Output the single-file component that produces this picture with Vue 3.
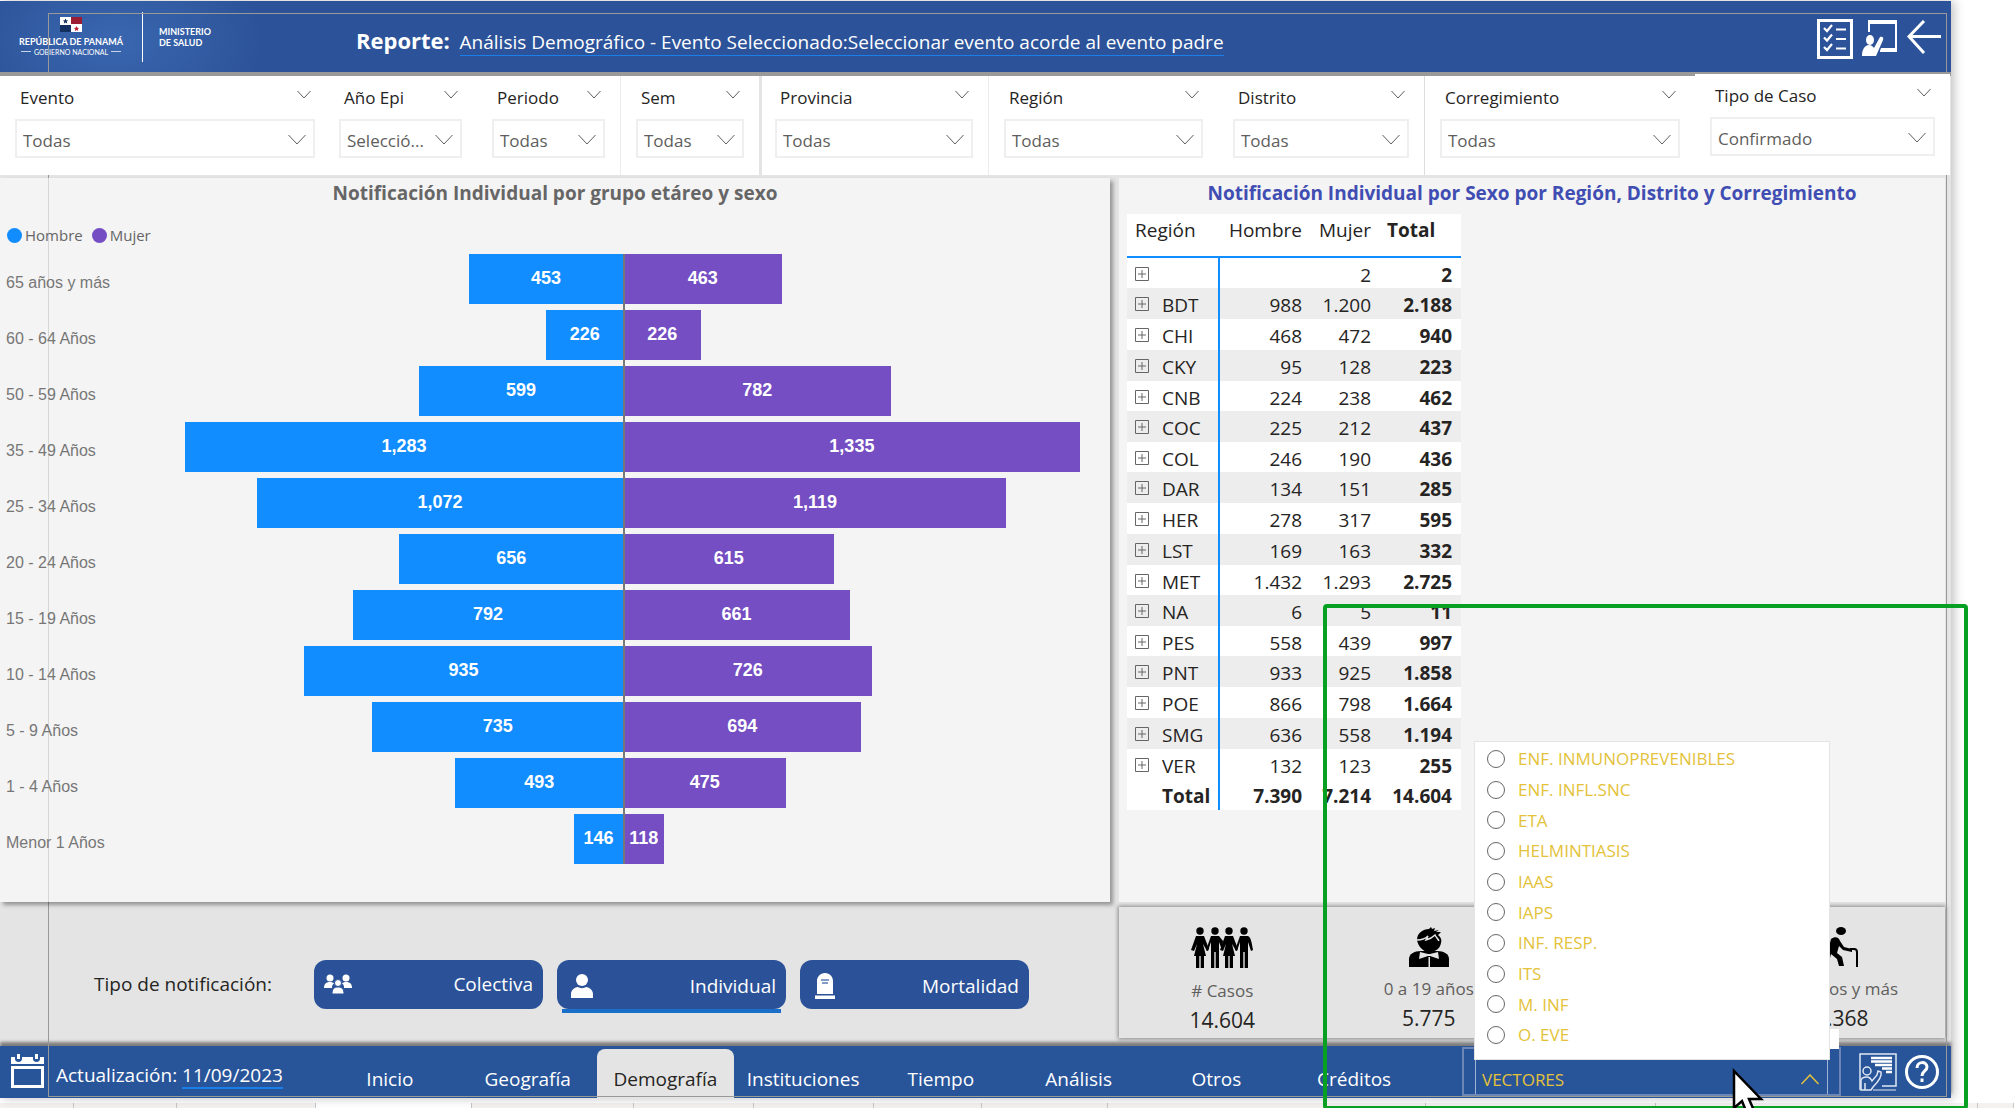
<script setup>
import { ref } from 'vue'

const filters = [
  { id: 'evento', label: 'Evento', value: 'Todas' },
  { id: 'anio', label: 'Año Epi', value: 'Selecció...' },
  { id: 'periodo', label: 'Periodo', value: 'Todas' },
  { id: 'sem', label: 'Sem', value: 'Todas' },
  { id: 'provincia', label: 'Provincia', value: 'Todas' },
  { id: 'region', label: 'Región', value: 'Todas' },
  { id: 'distrito', label: 'Distrito', value: 'Todas' },
  { id: 'corregimiento', label: 'Corregimiento', value: 'Todas' },
  { id: 'tipo', label: 'Tipo de Caso', value: 'Confirmado' },
]

const groups = [
  ['65 años y más', 453, 463],
  ['60 - 64 Años', 226, 226],
  ['50 - 59 Años', 599, 782],
  ['35 - 49 Años', 1283, 1335],
  ['25 - 34 Años', 1072, 1119],
  ['20 - 24 Años', 656, 615],
  ['15 - 19 Años', 792, 661],
  ['10 - 14 Años', 935, 726],
  ['5 - 9 Años', 735, 694],
  ['1 - 4 Años', 493, 475],
  ['Menor 1 Años', 146, 118],
]
const scaleMax = 1340
const pct = (n) => (n / scaleMax) * 100 + '%'
const fmt = (n) => n.toLocaleString('en-US')

const regions = [
  ['', '', '2', '2'],
  ['BDT', '988', '1.200', '2.188'],
  ['CHI', '468', '472', '940'],
  ['CKY', '95', '128', '223'],
  ['CNB', '224', '238', '462'],
  ['COC', '225', '212', '437'],
  ['COL', '246', '190', '436'],
  ['DAR', '134', '151', '285'],
  ['HER', '278', '317', '595'],
  ['LST', '169', '163', '332'],
  ['MET', '1.432', '1.293', '2.725'],
  ['NA', '6', '5', '11'],
  ['PES', '558', '439', '997'],
  ['PNT', '933', '925', '1.858'],
  ['POE', '866', '798', '1.664'],
  ['SMG', '636', '558', '1.194'],
  ['VER', '132', '123', '255'],
]

const tabs = ['Inicio', 'Geografía', 'Demografía', 'Instituciones', 'Tiempo', 'Análisis', 'Otros', 'Créditos']
const activeTab = ref('Demografía')

const events = [
  'ENF. INMUNOPREVENIBLES',
  'ENF. INFL.SNC',
  'ETA',
  'HELMINTIASIS',
  'IAAS',
  'IAPS',
  'INF. RESP.',
  'ITS',
  'M. INF',
  'O. EVE',
]
const picked = ref('')

const sheets = [73, 103, 139, 156, 162, 120, 120, 107, 126, 319, 231, 323, 35]
</script>

<template>
  <div class="page">
    <div class="board">
      <header class="top">
        <div class="logo">
          <div class="republic">
            <svg width="22" height="15" viewBox="0 0 22 15" aria-hidden="true">
              <rect width="22" height="15" fill="#fff" />
              <rect x="11" width="11" height="7" fill="#9c1c34" />
              <rect y="8" width="11" height="7" fill="#14305e" />
              <path d="M5.500 1.500l.8 1.700 1.800.2-1.300 1.200.4 1.800-1.700-.9-1.600.9.300-1.800-1.300-1.200 1.800-.2z" fill="#14305e" />
              <path d="M16.500 9l.8 1.700 1.800.2-1.300 1.200.4 1.800-1.700-.9-1.600.9.300-1.800-1.300-1.200 1.800-.2z" fill="#c01c34" />
            </svg>
            <strong>REPÚBLICA DE PANAMÁ</strong>
            <small>GOBIERNO NACIONAL</small>
          </div>
          <div class="ministry">MINISTERIO<br />DE SALUD</div>
        </div>
        <h1>Reporte: <a href="#">Análisis Demográfico - Evento Seleccionado:Seleccionar evento acorde al evento padre</a></h1>
        <div class="tools">
          <button type="button" aria-label="Lista">
            <svg width="36" height="40" viewBox="0 0 36 40" fill="none" stroke="#fff">
              <rect x="1.500" y="1.500" width="33" height="37" stroke-width="3" />
              <path d="M7 9l3 3 5-6M7 18.500l3 3 5-6M7 28l3 3 5-6" stroke-width="2.200" />
              <path d="M19 10.500h10M19 20h10M19 29.500h10" stroke-width="2" />
            </svg>
          </button>
          <button type="button" aria-label="Presentación">
            <svg width="36" height="37" viewBox="0 0 36 37" fill="#fff">
              <path d="M7 12V1h27v30H18" fill="none" stroke="#fff" stroke-width="2" />
              <path d="M6 1h29v3H6zM19 28h16v3H18z" />
              <ellipse cx="8" cy="20" rx="4" ry="5" />
              <path d="M0 36c0-7 3-11 7-11 3 0 4 2 5 3l6-11c2-1 4 0 3 3l-7 16z" />
            </svg>
          </button>
          <button type="button" aria-label="Atrás" class="back">
            <svg width="34" height="34" viewBox="0 0 34 34" fill="none" stroke="#fff" stroke-width="3">
              <path d="M34 16.500H2M17 1L2 16.500 17 33" />
            </svg>
          </button>
        </div>
      </header>

      <section class="filters">
        <div v-for="f in filters" :key="f.id" class="filter" :class="f.id">
          <div class="filter-head">
            <label :for="f.id">{{ f.label }}</label>
            <svg width="14" height="9" viewBox="0 0 14 9" aria-hidden="true"><path d="M.5 1L7 8l6.500-7" /></svg>
          </div>
          <div class="box">
            <select :id="f.id"><option>{{ f.value }}</option></select>
            <svg width="18" height="11" viewBox="0 0 18 11" aria-hidden="true"><path d="M.5 1L9 10l8.500-9" /></svg>
          </div>
        </div>
      </section>

      <main>
        <section class="panel pyramid">
          <h2>Notificación Individual por grupo etáreo y sexo</h2>
          <ul class="legend">
            <li class="male">Hombre</li>
            <li class="female">Mujer</li>
          </ul>
          <div class="chart">
            <div v-for="g in groups" :key="g[0]" class="row">
              <span class="group">{{ g[0] }}</span>
              <div class="half left"><div class="bar m" :style="{ width: pct(g[1]) }">{{ fmt(g[1]) }}</div></div>
              <div class="half"><div class="bar f" :style="{ width: pct(g[2]) }">{{ fmt(g[2]) }}</div></div>
            </div>
          </div>
        </section>

        <section class="panel regions">
          <h2>Notificación Individual por Sexo por Región, Distrito y Corregimiento</h2>
          <table>
            <thead>
              <tr><th class="name">Región</th><th>Hombre</th><th>Mujer</th><th class="sum">Total</th></tr>
            </thead>
            <tbody>
              <tr v-for="r in regions" :key="r[0]">
                <td class="name">
                  <div>
                    <svg width="14" height="14" viewBox="0 0 14 14" aria-hidden="true">
                      <path d="M.5.5h13v13H.5zM3 7h8M7 3v8" fill="none" stroke="#666" />
                    </svg>
                    <span>{{ r[0] }}</span>
                  </div>
                </td>
                <td>{{ r[1] }}</td>
                <td>{{ r[2] }}</td>
                <td class="sum">{{ r[3] }}</td>
              </tr>
              <tr class="total"><td class="name">Total</td><td>7.390</td><td>7.214</td><td class="sum">14.604</td></tr>
            </tbody>
          </table>
        </section>

        <section class="kinds">
          <span>Tipo de notificación:</span>
          <button type="button">
            <svg width="28" height="20" viewBox="0 0 28 20" fill="#fff">
              <circle cx="6" cy="4" r="3.500" /><circle cx="22" cy="4" r="3.500" />
              <path d="M0 14c0-4 2-6 6-6 2 0 3 .5 4 1.500C8 11 8 12 8 14zM28 14c0-4-2-6-6-6-2 0-3 .5-4 1.500 2 1.500 2 2.500 2 4.500z" />
              <circle cx="14" cy="9" r="3.500" stroke="#2b5298" />
              <path d="M8 20c0-5 2-7 6-7s6 2 6 7z" stroke="#2b5298" />
            </svg>
            Colectiva
          </button>
          <button type="button" class="current">
            <svg width="28" height="24" viewBox="0 0 28 24" fill="#fff">
              <circle cx="15" cy="6" r="6" />
              <path d="M4 24v-4c0-4 4-7 7-7 2 1.500 6 1.500 8 0 3 0 7 3 7 7v4z" />
            </svg>
            Individual
          </button>
          <button type="button">
            <svg width="28" height="26" viewBox="0 0 28 26" fill="#fff">
              <path d="M7 21V8c0-4 3-8 8-8s8 4 8 8v13zM5 22.500h20V26H5z" />
              <path d="M11 7h8M12 10h6" stroke="#5c7db5" stroke-width="1.500" />
            </svg>
            Mortalidad
          </button>
        </section>

        <section class="cards">
          <div class="card">
            <svg width="62" height="42" viewBox="0 0 62 42">
              <circle cx="9" cy="4" r="3.700" /><circle cx="24" cy="4" r="3.700" /><circle cx="38" cy="4" r="3.700" /><circle cx="53" cy="4" r="3.700" />
              <path d="M5 9h8l5 13-2 2-4-7 3 12h-2v12H9.700V29H8.300v12H5V29H3l3-12-3 7-3-1z" />
              <path d="M34 9h8l5 13-2 2-4-7 3 12h-2v12h-3.300V29h-1.400v12H34V29h-2l3-12-3 7-3-1z" />
              <path d="M20 9h8l4 5-1 9-3-8v26h-3.300V25h-1.400v16H20V15l-3 9-2-1z" />
              <path d="M49 9h8c3 1 4 8 5 14l-2 1-3-9v26h-3.300V25h-1.400v16H49V15l-3 9-2-1z" />
            </svg>
            <span>#&nbsp;Casos</span><b>14.604</b>
          </div>
          <div class="card">
            <svg width="40" height="40" viewBox="0 0 40 40">
              <path d="M8 13c0-7 6-11 12-11l2-2 1 2 3-1-1 3 5-1-3 2 5 0-3 3c3 2 4 5 3 8-1 6-6 9-12 9S9 19 8 13z" />
              <path d="M8 13c5 0 9-2 11-4l-2 4c4-1 7-3 9-5 1 2 3 4 4 6" fill="none" stroke="#e4e4e4" stroke-width="1.500" />
              <path d="M0 40v-8c0-5 5-8 12-8h16c7 0 12 3 12 8v8z" />
              <path d="M11 25l8 2h2l8-2 1 7-9-3h-2l-9 3zM19.500 30h1.500v10h-1.500z" fill="#e4e4e4" />
            </svg>
            <span>0 a 19 años</span><b>5.775</b>
          </div>
          <div class="card"></div>
          <div class="card">
            <svg width="40" height="40" viewBox="0 0 40 40">
              <ellipse cx="19" cy="4" rx="5" ry="4" />
              <path d="M9 12c4-3 8-2 9 2l4 6 8 2v3l-9-2-4-4-2 7 5 4 2 9h-5l-2-7-6-5-3 12H1l5-15z" />
              <path d="M28 22h4c2 0 3 1 3 3v15" fill="none" stroke="#000" stroke-width="2" />
            </svg>
            <span>60 años y más</span><b>1.368</b>
          </div>
        </section>
      </main>

      <footer class="bar-bottom">
        <div class="updated">
          <svg width="33" height="34" viewBox="0 0 33 34" fill="none" stroke="#fff">
            <path d="M1.500 13.500h30v19h-30z" stroke-width="3" />
            <path d="M0 3h4v2c0 4 7 4 7 0V3h11v2c0 4 7 4 7 0V3h4v7H0z" fill="#fff" stroke="none" />
            <path d="M7.500 0v5M25.500 0v5" stroke-width="3" />
          </svg>
          <span>Actualización: <a href="#">11/09/2023</a></span>
        </div>
        <nav>
          <a v-for="t in tabs" :key="t" href="#" :class="{ active: t === activeTab }" @click.prevent="activeTab = t">{{ t }}</a>
        </nav>
        <div class="slicer">
          <div class="menu">
            <label v-for="e in events" :key="e"><input v-model="picked" type="radio" name="evento-padre" :value="e" />{{ e }}</label>
          </div>
          <button type="button" class="combo" aria-expanded="true">
            VECTORES
            <svg width="18" height="11" viewBox="0 0 18 11" fill="none" stroke="#e4c23a" stroke-width="1.500"><path d="M.5 10L9 1l8.500 9" /></svg>
          </button>
        </div>
        <div class="help">
          <button type="button" aria-label="Capacitación">
            <svg width="38" height="38" viewBox="0 0 38 38" fill="none" stroke="#dfe7f3" stroke-width="1.500">
              <path d="M1 37V1h36v32H23" />
              <path d="M12 5h21M12 8.500h21M16 12h17M23 15.500h10M27 19h6" stroke="#fff" stroke-width="2.500" />
              <circle cx="8" cy="18" r="4" />
              <path d="M2 37V28c0-3 3-4 6-4s4 2 5 4l5-6 1-4 3 1c1 4-2 9-8 15l-2 3zM6 30v7" />
              <path d="M14 37h23" stroke-width="1" />
            </svg>
          </button>
          <button type="button" aria-label="Ayuda">
            <svg width="34" height="36" viewBox="0 0 34 36" fill="none" stroke="#fff" stroke-width="3">
              <circle cx="17" cy="18" r="15.500" />
              <path d="M12 14c0-7 10-7 10-1 0 4-5 4-5 9" />
              <path d="M17 24.500v3.500" />
            </svg>
          </button>
        </div>
      </footer>
      <div class="outline"></div>
    </div>

    <div class="sheets">
      <i v-for="(w, i) in sheets" :key="i" :class="{ on: i === 3 }" :style="{ flexGrow: w }"></i>
    </div>

    <div class="mark"></div>
    <svg class="cursor" width="34" height="52" viewBox="0 0 34 52" aria-hidden="true">
      <path d="M2 3v37l8-7 6 15 7-3-6-14h12z" fill="#fff" stroke="#000" stroke-width="2.500" />
    </svg>
  </div>
</template>

<style>
body {
  margin: 0;
  background: #fff;
}
</style>

<style scoped>
* {
  box-sizing: border-box;
}
.page {
  position: relative;
  overflow: hidden;
  padding-top: 1px;
  background: #fff;
  font-family: 'Open Sans', 'Noto Sans', sans-serif;
  color: #252423;
}
button {
  font: inherit;
  padding: 0;
  border: 0;
  background: none;
  color: inherit;
}
svg {
  display: block;
  flex: none;
}
.board {
  position: relative;
  margin-right: 63px;
  background: #e4e4e4;
  box-shadow: 3px 0 10px rgba(0, 0, 0, 0.25);
}
.outline {
  position: absolute;
  z-index: 1;
  inset: 12px 4px 1px 48px;
  border: 1px solid #999;
  pointer-events: none;
}

/* header */
.top {
  display: flex;
  align-items: center;
  height: 71px;
  background: radial-gradient(ellipse 150px 90px at 115px 40px, #3a67b0, #2c5399) #2c5399;
  box-shadow: 0 4px 0 #999;
  margin-bottom: 4px;
  color: #fff;
}
.logo {
  display: flex;
  align-items: center;
  width: 356px;
  font-family: Lato, sans-serif;
}
.republic {
  display: flex;
  flex-direction: column;
  align-items: center;
  width: 143px;
  height: 50px;
  padding-top: 5px;
  border-right: 1px solid #fff;
}
.republic strong {
  margin-top: 4px;
  font-size: 9px;
  line-height: 12px;
  white-space: nowrap;
}
.republic small {
  display: flex;
  align-items: center;
  gap: 3px;
  font-size: 7px;
  line-height: 8px;
  white-space: nowrap;
}
.republic small::before,
.republic small::after {
  content: '';
  width: 10px;
  height: 1px;
  background: #c5d2e8;
}
.ministry {
  margin-left: 16px;
  font-size: 9px;
  font-weight: 700;
  line-height: 11px;
}
h1 {
  margin: 0;
  padding-top: 10px;
  font-size: 22px;
  line-height: 26px;
  white-space: nowrap;
}
h1 a {
  display: inline-block;
  margin-left: 4px;
  font-size: 19px;
  font-weight: 400;
  color: #fff;
  text-decoration: none;
  border-bottom: 1px solid #1a7fe8;
}
.tools {
  display: flex;
  gap: 9px;
  margin-left: auto;
  padding: 4px 10px 0 0;
  align-items: center;
}
.back {
  padding-bottom: 4px;
}

/* filters */
.filters {
  position: relative;
  z-index: 2;
  display: grid;
  grid-template-columns: 330fr 147fr 143fr 139fr 229fr 230fr 206fr 271fr 255fr;
  height: 99px;
  margin-right: 1px;
  background: #fff;
}
.filter {
  padding: 10px 15px 0;
  min-width: 0;
}
.anio {
  padding-left: 9px;
}
.sem,
.region {
  border-left: 1px solid #ececec;
}
.provincia {
  padding-left: 13px;
  border-left: 3px solid #e4e4e4;
}
.corregimiento {
  border-left: 1px solid #ddd;
}
.tipo {
  margin-top: -2px;
  background: #fff;
}
.filter-head {
  display: flex;
  justify-content: space-between;
  padding: 0 4px 0 5px;
  font-size: 17px;
  line-height: 24px;
}
.filter-head svg {
  margin-top: 4px;
}
.filter path {
  fill: none;
  stroke: #605e5c;
}
.box {
  position: relative;
  margin-top: 9px;
}
.box svg {
  position: absolute;
  right: 9px;
  top: 15px;
  pointer-events: none;
}
.box select {
  appearance: none;
  display: block;
  width: 100%;
  height: 39px;
  padding: 3px 0 0 6px;
  border: 2px solid #efefef;
  border-radius: 0;
  background: #fff;
  color: #605e5c;
  font: 17px 'Open Sans', sans-serif;
}

/* panels */
main {
  display: grid;
  grid-template-columns: 1110fr 826fr;
  column-gap: 9px;
  padding: 3px 6px 0 0;
}
.panel {
  position: relative;
  z-index: 2;
  background: rgba(255, 255, 255, 0.6);
}
.pyramid {
  padding-bottom: 38px;
  box-shadow: 3px 3px 4px rgba(0, 0, 0, 0.35);
}
h2 {
  margin: 0;
  font-size: 19px;
  line-height: 30px;
  text-align: center;
  color: #666;
}
.regions h2 {
  color: #404db2;
}
.legend {
  display: flex;
  gap: 9px;
  margin: 15px 0 7px;
  padding: 0 0 0 7px;
  list-style: none;
  font-size: 15px;
  line-height: 24px;
  color: #666;
}
.legend li {
  display: flex;
  align-items: center;
  gap: 3px;
}
.legend li::before {
  content: '';
  width: 15px;
  height: 15px;
  border-radius: 50%;
  background: #118dff;
}
.legend .female::before {
  background: #744ec2;
}
.chart {
  display: grid;
  gap: 6px;
  padding-right: 28px;
  font-family: 'Liberation Sans', Arial, sans-serif;
}
.row {
  display: grid;
  grid-template-columns: 165px 1fr 1fr;
  grid-template-rows: 50px;
}
.group {
  padding: 7px 0 0 6px;
  font-size: 16px;
  line-height: 43px;
  color: #777;
  white-space: nowrap;
}
.half {
  display: flex;
}
.half.left {
  position: relative;
  justify-content: flex-end;
}
.half.left::after {
  content: '';
  position: absolute;
  top: 0;
  right: -1px;
  width: 2px;
  height: 56px;
  background: #777;
}
.row:last-child .half.left::after {
  height: 50px;
}
.bar {
  font-size: 18px;
  font-weight: 700;
  line-height: 48px;
  text-align: center;
  color: #fff;
}
.bar.m {
  background: #118dff;
}
.bar.f {
  background: #744ec2;
}

/* table */
table {
  margin: 6px 0 0 8px;
  width: 334px;
  table-layout: fixed;
  border-collapse: separate;
  border-spacing: 0;
  background: #fff;
  font-size: 19px;
  line-height: 24px;
}
th {
  width: 69px;
  height: 44px;
  padding: 4px 9px 0 0;
  border-bottom: 2px solid #118dff;
  font-weight: 400;
  text-align: right;
  vertical-align: top;
}
th:nth-child(2) {
  width: 91px;
}
th.name {
  width: 93px;
  padding-left: 8px;
  text-align: left;
}
th.sum {
  width: 81px;
  padding-left: 7px;
  text-align: left;
}
.sum,
.total td {
  font-weight: 700;
}
td {
  height: 30px;
  padding: 3px 9px 0 0;
  text-align: right;
  vertical-align: middle;
}
tbody tr:nth-child(even) td {
  height: 31px;
  background: #ededed;
}
tbody tr:nth-child(6n + 3) td {
  height: 31px;
}
tbody tr.total td {
  background: #fff;
}
td.name {
  padding-left: 8px;
  border-right: 2px solid #118dff;
  text-align: left;
}
td.name div {
  display: flex;
  align-items: flex-start;
  gap: 13px;
  height: 24px;
}
td.name svg {
  margin-top: 4px;
}
.total td.name {
  padding-left: 35px;
  padding-right: 0;
}

/* notification kind */
.kinds {
  display: flex;
  align-items: center;
  height: 144px;
  padding: 20px 0 0 94px;
  font-size: 19px;
}
.kinds span {
  width: 220px;
}
.kinds button {
  position: relative;
  display: flex;
  align-items: center;
  justify-content: space-between;
  width: 229px;
  height: 49px;
  margin-right: 14px;
  padding: 0 10px;
  border-radius: 12px;
  background: #2b5298;
  color: #fff;
}
.kinds button + button {
  padding-top: 4px;
}
.kinds .current::after {
  content: '';
  position: absolute;
  left: 5px;
  right: 5px;
  bottom: -4px;
  height: 4px;
  background: #1a70c8;
}

/* summary cards */
.cards {
  display: grid;
  grid-template-columns: repeat(4, 1fr);
  margin: 5px 0 8px;
  background: #e4e4e4;
  box-shadow: 0 0 4px 1px rgba(0, 0, 0, 0.4);
}
.card {
  display: flex;
  flex-direction: column;
  align-items: center;
  padding-top: 20px;
}
.card span {
  margin-top: 10px;
  font-size: 17px;
  line-height: 24px;
  color: #605e5c;
}
.card b {
  margin-top: 4px;
  font-size: 21px;
  font-weight: 400;
  line-height: 26px;
}

/* bottom bar */
.bar-bottom {
  display: grid;
  grid-template-columns: 321fr 1102fr 39fr 379fr 18fr 92fr;
  height: 52px;
  margin-bottom: 5px;
  background: #285499;
  box-shadow: 0 -4px 3px rgba(0, 0, 0, 0.45);
  color: #fff;
  font-size: 19px;
}
.updated {
  display: flex;
  align-items: center;
  gap: 12px;
  padding-left: 11px;
  white-space: nowrap;
}
.updated svg {
  margin-bottom: 4px;
}
.updated span {
  padding-top: 5px;
}
.updated a {
  display: inline-block;
  line-height: 24px;
  color: #fff;
  text-decoration: none;
  border-bottom: 2px solid #1a7fe8;
}
nav {
  display: grid;
  grid-template-columns: repeat(8, 1fr);
  padding-top: 3px;
}
nav a {
  display: flex;
  align-items: center;
  justify-content: center;
  padding-top: 8px;
  color: #fff;
  text-decoration: none;
}
nav a.active {
  background: #e4e4e4;
  color: #252423;
  border-radius: 8px 8px 0 0;
}
.slicer {
  grid-column: 4;
  position: relative;
  z-index: 4;
  margin: 1px 0 4px;
  padding: 10px 11px 0;
  border: 2px solid #6c87b4;
}
.slicer::before {
  content: '';
  position: absolute;
  right: 0;
  bottom: 100%;
  width: 20px;
  height: 20px;
  background: #fff;
}
.combo {
  display: flex;
  align-items: center;
  justify-content: space-between;
  width: 100%;
  height: 35px;
  padding: 5px 8px 0 6px;
  border: 1px solid #9fb4d6;
  border-width: 0 1px;
  font-size: 17px;
  color: #e4c23a;
}
.menu {
  position: absolute;
  left: 10px;
  right: 9px;
  bottom: 34px;
  padding: 1px 0 9px 12px;
  border: 1px solid #e4e4e4;
  background: #fff;
}
.menu label {
  display: flex;
  align-items: center;
  gap: 13px;
  height: 31px;
  font-size: 17px;
  color: #e4c23a;
}
.menu label:nth-child(3n) {
  height: 30px;
}
.menu input {
  appearance: none;
  width: 18px;
  height: 18px;
  margin: 0;
  border: 1px solid #666;
  border-radius: 50%;
}
.help {
  grid-column: 6;
  display: flex;
  align-items: center;
  gap: 8px;
  padding-bottom: 2px;
}

/* sheet strip under the report */
.sheets {
  display: flex;
  height: 6px;
  background: #f3f2f1;
}
.sheets i {
  flex: 1 1 0;
  border-right: 1px solid #c8c6c4;
}
.sheets .on {
  background: #fff;
}

/* highlight and pointer lie over the report */
.mark {
  position: absolute;
  z-index: 5;
  top: 604px;
  right: 46px;
  bottom: -1px;
  left: 1323px;
  border: 4px solid #08a022;
  border-radius: 4px;
  pointer-events: none;
}
.cursor {
  position: absolute;
  z-index: 6;
  right: 248px;
  bottom: -11px;
}
</style>
